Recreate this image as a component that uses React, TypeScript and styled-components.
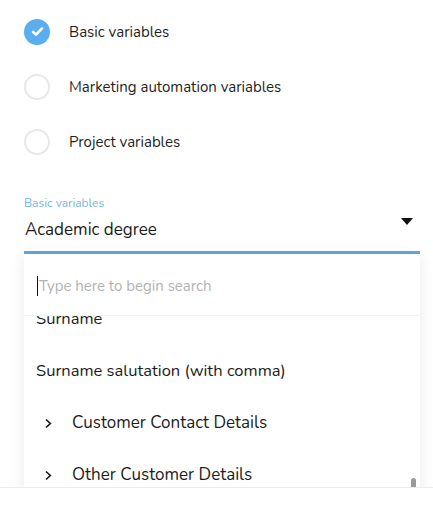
import React, { useEffect, useRef } from "react";
import styled, { createGlobalStyle } from "styled-components";

const GlobalStyle = createGlobalStyle`
  html, body {
    margin: 0;
    padding: 0;
    background: #ffffff;
  }
  body {
    font-family: "Nunito", Lato, "Noto Sans", sans-serif;
    color: #222;
  }
`;

const Frame = styled.div`
  height: 488px;
  overflow: hidden;
  border-bottom: 1px solid #ececec;
  box-sizing: border-box;
`;

const Content = styled.div`
  padding: 4px 13px 0 24px;
`;

const RadioGroup = styled.div`
  display: flex;
  flex-direction: column;
`;

const RadioRow = styled.label`
  display: flex;
  align-items: center;
  gap: 19px;
  height: 55px;
  font-size: 15px;
  color: #1f1f1f;
`;

const RadioCircle = styled.span<{ $checked?: boolean }>`
  width: 26px;
  height: 26px;
  box-sizing: border-box;
  border-radius: 50%;
  display: flex;
  align-items: center;
  justify-content: center;
  background: ${({ $checked }) => ($checked ? "#5aaef0" : "#fff")};
  border: ${({ $checked }) => ($checked ? "none" : "2px solid #e8e8e8")};
`;

const SelectField = styled.div`
  margin-top: 26px;
  display: flex;
  flex-direction: column;
`;

const FieldLabel = styled.div`
  font-size: 12px;
  color: #74b6e6;
  line-height: 16px;
`;

const ValueRow = styled.div`
  display: flex;
  align-items: flex-start;
  justify-content: space-between;
  padding: 0 1px;
  height: 40px;
  border-bottom: 3px solid #62a8dc;
`;

const ValueText = styled.span`
  font-size: 17px;
  line-height: 24px;
  color: #1a1a1a;
  margin-top: 7px;
`;

const Caret = styled.span`
  width: 0;
  height: 0;
  border-left: 6px solid transparent;
  border-right: 6px solid transparent;
  border-top: 7px solid #111;
  margin: 7px 6px 0 0;
`;

const Panel = styled.div`
  position: relative;
  background: #fff;
  box-shadow: 0 2px 14px rgba(0, 0, 0, 0.09);
  width: 396px;
`;

const SearchBox = styled.div`
  height: 61px;
  display: flex;
  align-items: center;
  padding-left: 13px;
  border-bottom: 1px solid #f2f2f2;
`;

const SearchInput = styled.div`
  display: flex;
  align-items: center;
  font-size: 15px;
  color: #b3b3b3;
  margin-top: 2px;
`;

const TextCursor = styled.span`
  width: 1px;
  height: 20px;
  background: #111;
  margin-right: 1px;
`;

const List = styled.div`
  height: 180px;
  overflow: hidden;
`;

const Item = styled.div<{ $group?: boolean }>`
  height: 52px;
  display: flex;
  align-items: center;
  padding-left: ${({ $group }) => ($group ? "20px" : "12px")};
  gap: 19px;
  font-size: ${({ $group }) => ($group ? "17px" : "16.5px")};
  color: #1c1c1c;
`;

const Chevron = styled.span`
  width: 9px;
  display: flex;
  justify-content: center;
  margin-top: 3px;
`;

const ScrollThumb = styled.div`
  position: absolute;
  right: 4px;
  top: 224px;
  width: 5px;
  height: 20px;
  border-radius: 3px 3px 0 0;
  background: #9a9a9a;
`;

const items: { label: string; group?: boolean }[] = [
  { label: "Academic degree" },
  { label: "First name" },
  { label: "Full name" },
  { label: "Salutation" },
  { label: "Surname" },
  { label: "Surname salutation (with comma)" },
  { label: "Customer Contact Details", group: true },
  { label: "Other Customer Details", group: true },
  { label: "Company Details", group: true },
];

const Check = () => (
  <svg width="13" height="11" viewBox="0 0 13 11">
    <path d="M2 5.8 L5 8.6 L11 2.4" fill="none" stroke="#fff" strokeWidth="2.6" strokeLinecap="round" strokeLinejoin="round" />
  </svg>
);

const ChevronIcon = () => (
  <svg width="9" height="13" viewBox="0 0 9 13">
    <path d="M2 2.5 L6.3 6.5 L2 10.5" fill="none" stroke="#1a1a1a" strokeWidth="1.7" />
  </svg>
);

export default function App() {
  const listRef = useRef<HTMLDivElement>(null);

  useEffect(() => {
    if (listRef.current) listRef.current.scrollTop = 4 * 52 + 24;
  }, []);

  return (
    <Frame>
      <GlobalStyle />
      <Content>
        <RadioGroup>
          <RadioRow>
            <RadioCircle $checked>
              <Check />
            </RadioCircle>
            Basic variables
          </RadioRow>
          <RadioRow>
            <RadioCircle />
            Marketing automation variables
          </RadioRow>
          <RadioRow>
            <RadioCircle />
            Project variables
          </RadioRow>
        </RadioGroup>

        <SelectField>
          <FieldLabel>Basic variables</FieldLabel>
          <ValueRow>
            <ValueText>Academic degree</ValueText>
            <Caret />
          </ValueRow>
        </SelectField>

        <Panel>
          <SearchBox>
            <SearchInput>
              <TextCursor />
              Type here to begin search
            </SearchInput>
          </SearchBox>
          <List ref={listRef}>
            {items.map((it) => (
              <Item key={it.label} $group={it.group}>
                {it.group && (
                  <Chevron>
                    <ChevronIcon />
                  </Chevron>
                )}
                {it.label}
              </Item>
            ))}
          </List>
          <ScrollThumb />
        </Panel>
      </Content>
    </Frame>
  );
}
